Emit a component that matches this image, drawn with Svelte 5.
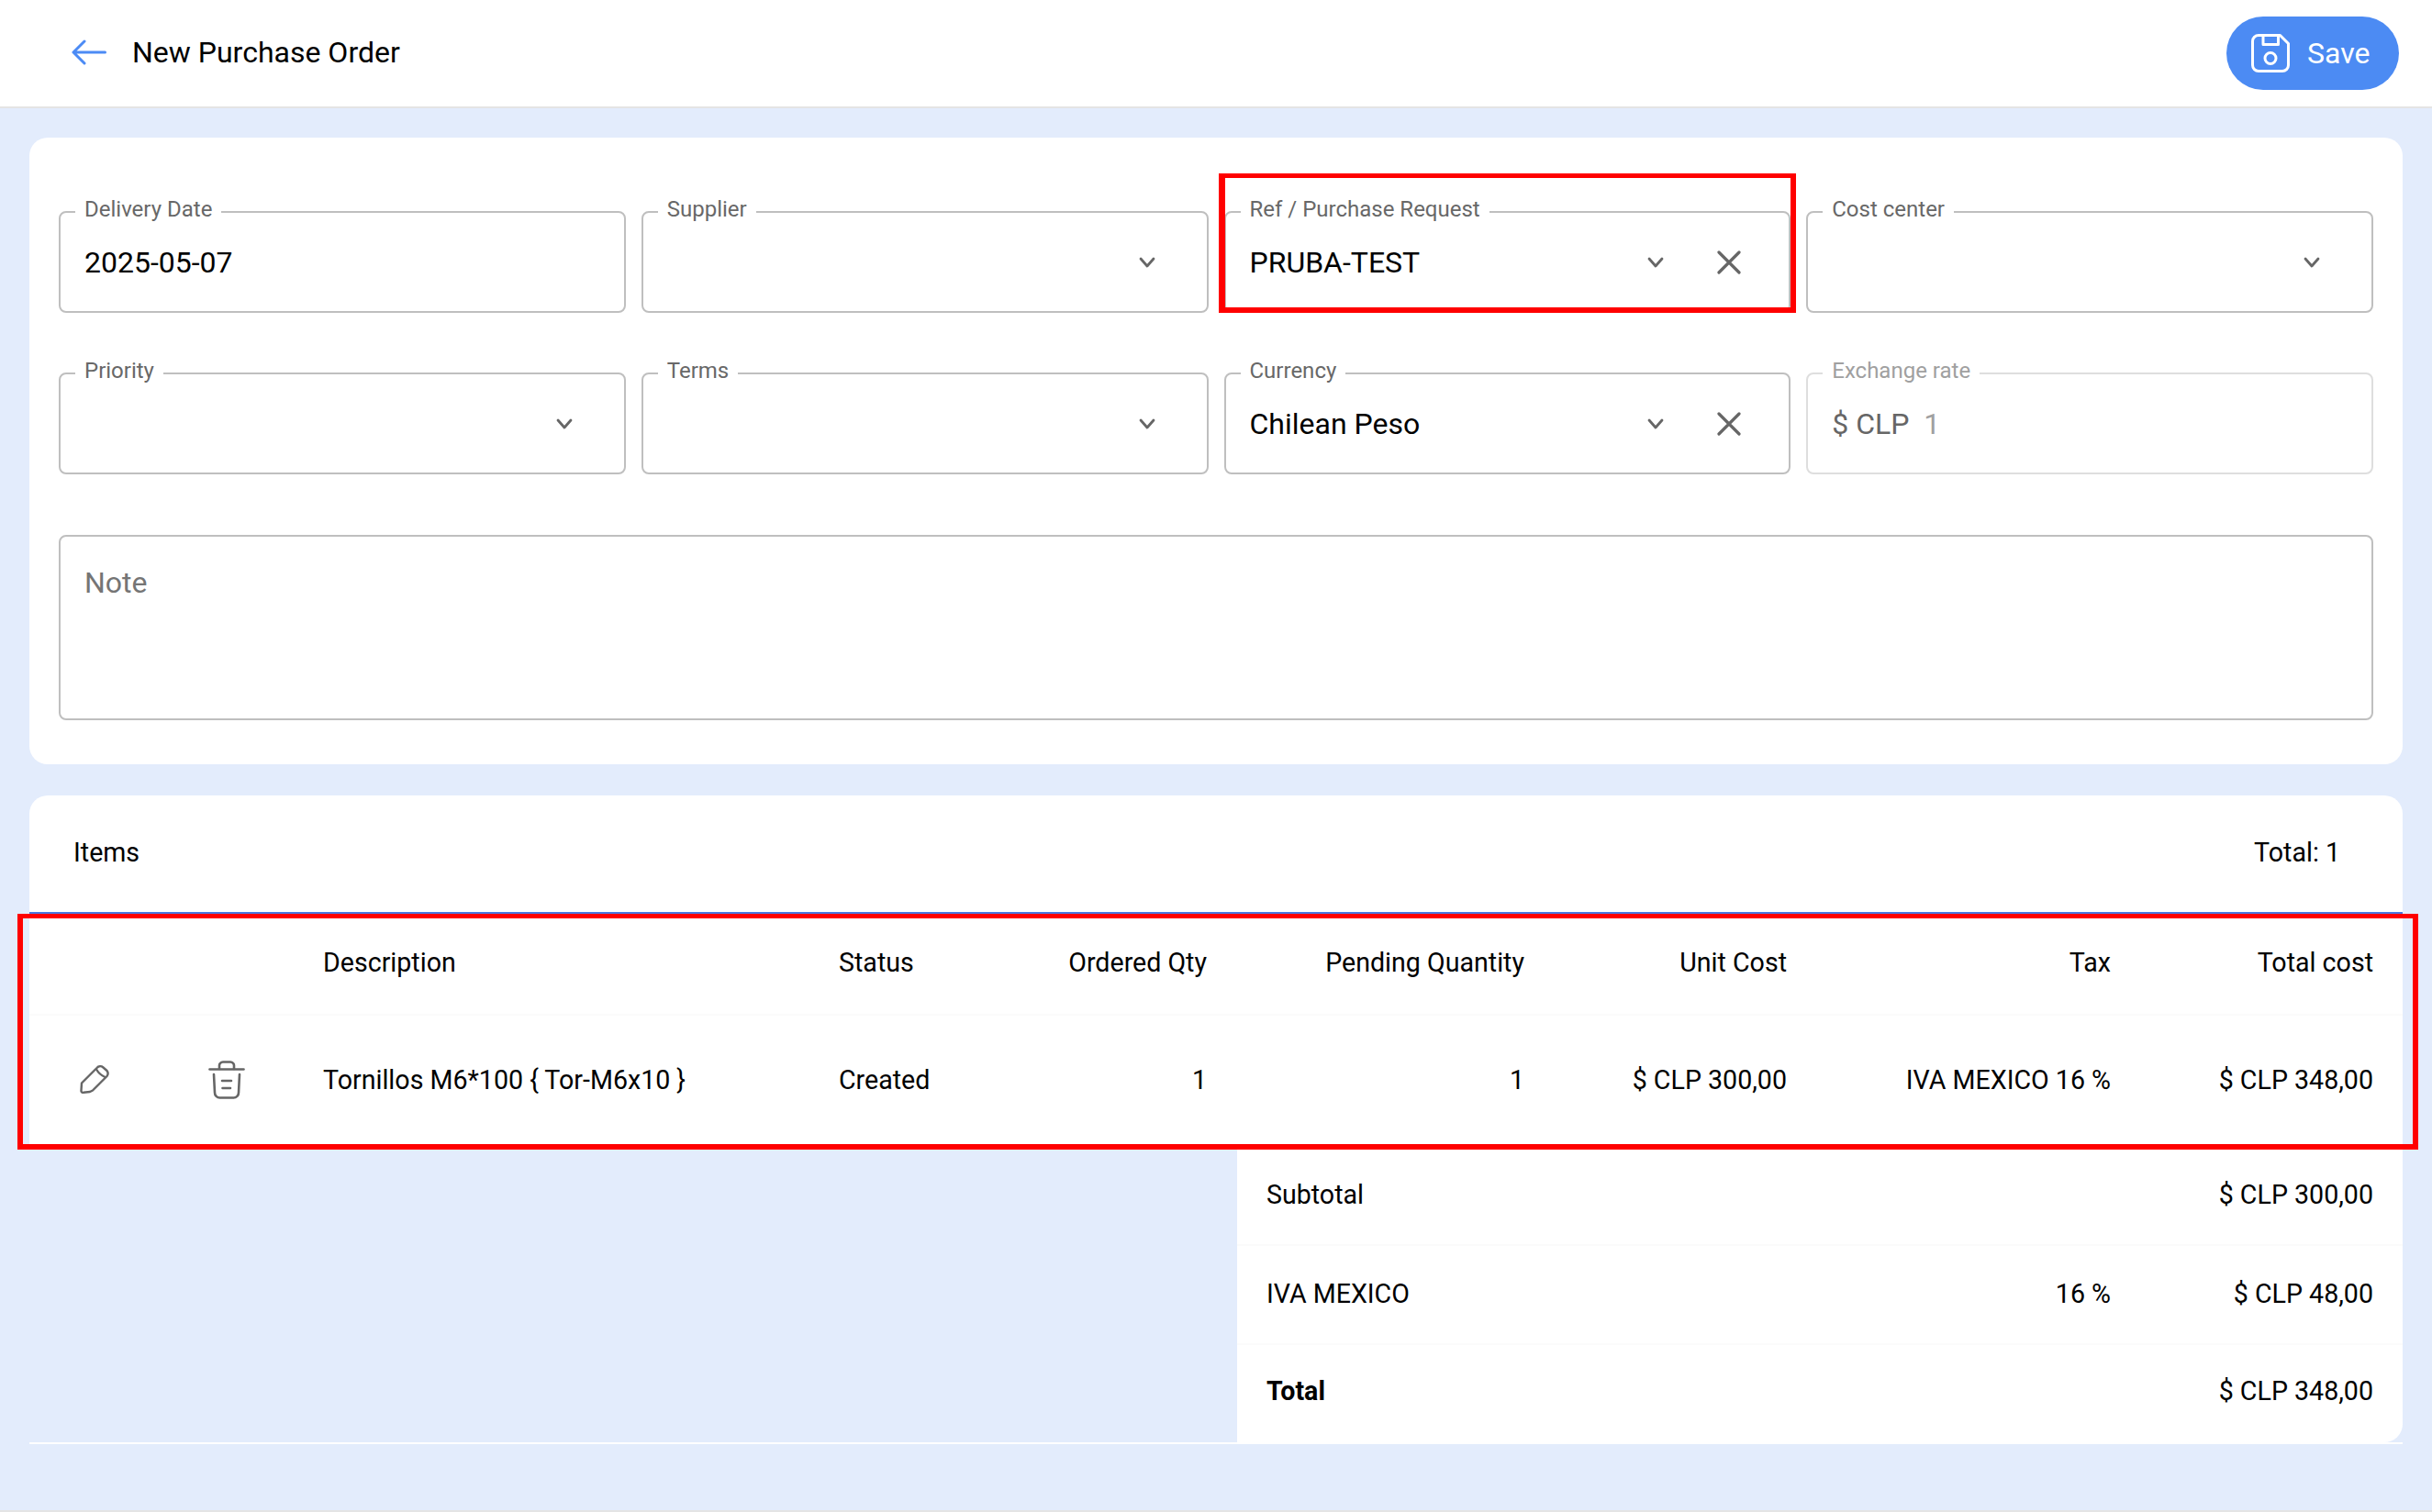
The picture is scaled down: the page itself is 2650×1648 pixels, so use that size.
<script>
  const columns = [
    { label: 'Description', value: 'Tornillos M6*100 { Tor-M6x10 }', align: 'left' },
    { label: 'Status', value: 'Created', align: 'left' },
    { label: 'Ordered Qty', value: '1', align: 'right' },
    { label: 'Pending Quantity', value: '1', align: 'right' },
    { label: 'Unit Cost', value: '$ CLP 300,00', align: 'right' },
    { label: 'Tax', value: 'IVA MEXICO 16 %', align: 'right' },
    { label: 'Total cost', value: '$ CLP 348,00', align: 'right' }
  ];
  const totals = [
    { label: 'Subtotal', rate: '', amount: '$ CLP 300,00', strong: false },
    { label: 'IVA MEXICO', rate: '16 %', amount: '$ CLP 48,00', strong: false },
    { label: 'Total', rate: '', amount: '$ CLP 348,00', strong: true }
  ];
</script>

{#snippet chevron()}
  <svg class="chev" viewBox="0 0 20 20" fill="none" stroke="#666" stroke-width="2.8" stroke-linecap="round" stroke-linejoin="round"><path d="M3 6 10 14 17 6" /></svg>
{/snippet}
{#snippet cross()}
  <svg class="cross" viewBox="0 0 26 26" fill="none" stroke="#666" stroke-width="3.2" stroke-linecap="round"><path d="M2 2 24 24M24 2 2 24" /></svg>
{/snippet}
{#snippet field(label, value, select, clear, cls, prefix)}
  <fieldset class="field {cls}">
    <legend>{label}</legend>
    <span class="value">{#if prefix}<span class="prefix">{prefix}</span>{/if}{value}</span>
    {#if select}<span class="adorn" class:withclear={clear}>{@render chevron()}{#if clear}{@render cross()}{/if}</span>{/if}
  </fieldset>
{/snippet}

<div class="page">
  <header class="topbar">
    <div class="title">
      <svg class="back" viewBox="0 0 38 28" fill="none" stroke="#4c8bf5" stroke-width="3" stroke-linecap="round" stroke-linejoin="round"><path d="M36.5 14H2M14 2 2 14 14 26" /></svg>
      <span>New Purchase Order</span>
    </div>
    <button class="save">
      <svg viewBox="0 0 42 42" fill="none" stroke="#fff" stroke-width="3" stroke-linejoin="round"><path d="M8 1.5H31.5L40.5 10.500V34A6.500 6.500 0 0 1 34 40.500H8A6.500 6.500 0 0 1 1.500 34V8A6.500 6.500 0 0 1 8 1.500Z" /><path d="M13 1.500V11.500H29.500V1.500" /><circle cx="21" cy="26.500" r="6" /></svg>
      <span>Save</span>
    </button>
  </header>

  <main class="content">
    <section class="card form">
      <div class="grid">
        {@render field('Delivery Date', '2025-05-07', false, false, '', '')}
        {@render field('Supplier', '', true, false, '', '')}
        {@render field('Ref / Purchase Request', 'PRUBA-TEST', true, true, '', '')}
        {@render field('Cost center', '', true, false, '', '')}
        {@render field('Priority', '', true, false, '', '')}
        {@render field('Terms', '', true, false, '', '')}
        {@render field('Currency', 'Chilean Peso', true, true, '', '')}
        {@render field('Exchange rate', '1', false, false, 'disabled', '$ CLP\u00a0\u00a0')}
      </div>
      <div class="note">Note</div>
    </section>

    <section class="items">
      <div class="items-head"><span>Items</span><span>Total: 1</span></div>
      <div class="table">
        <div class="row head">
          <span></span><span></span>
          {#each columns as c}<span class="cell" class:right={c.align === 'right'}>{c.label}</span>{/each}
        </div>
        <div class="row body">
          <span class="iconcell">
            <svg class="pencil" viewBox="0 0 32 31" fill="none" stroke="#666" stroke-width="2.4" stroke-linecap="round" stroke-linejoin="round"><path d="M2 19.500 18.500 3A5 5 0 0 1 25.500 2.500L29.500 6A5 5 0 0 1 29.500 12L14 27.500 11 29 4 29.800A2 2 0 0 1 1.500 27.500Z" /><path d="M18 4.500C20 8 23 11 27.500 13" /></svg>
          </span>
          <span class="iconcell">
            <svg class="trash" viewBox="0 0 40 42" fill="none" stroke="#666" stroke-width="2.600" stroke-linecap="round" stroke-linejoin="round"><path d="M1.500 9.500H38.500" /><path d="M12 9V6A4 4 0 0 1 16 1.500H24A4 4 0 0 1 28 6V9" /><path d="M6 15 7 35A5.500 5.500 0 0 0 12.500 40.500H27.500A5.500 5.500 0 0 0 33 35L34 15" /><path d="M15 22H25M15.500 30H24" /></svg>
          </span>
          {#each columns as c}<span class="cell" class:right={c.align === 'right'}>{c.value}</span>{/each}
        </div>
      </div>
      <div class="lower">
        <div class="totals">
          {#each totals as t}
            <div class="total-row" class:strong={t.strong}>
              <span class="t-label">{t.label}</span><span class="t-rate">{t.rate}</span><span class="t-amount">{t.amount}</span>
            </div>
          {/each}
        </div>
      </div>
    </section>
  </main>

  <div class="mark mark-a"></div>
  <div class="mark mark-b"></div>
</div>

<style>
  :global(body) { margin: 0; }
  .page {
    position: relative; width: 2650px; height: 1648px; box-sizing: border-box; overflow: hidden;
    background: #e3ecfc; font-family: Roboto, sans-serif; font-size: 28.6px; color: #000;
    border-bottom: 2px solid #e4e4e4;
  }
  .topbar {
    height: 118px; box-sizing: border-box; background: #fff; border-bottom: 2px solid #e4e4e4;
    display: flex; align-items: center; justify-content: space-between; padding: 0 36px 0 78px;
  }
  .title { display: flex; align-items: center; gap: 28px; font-size: 32px; margin-top: -2px; }
  .back { width: 38px; height: 28px; }
  .save {
    width: 188px; height: 80px; border: 0; border-radius: 40px; background: #4c8bf3; color: #fff;
    display: flex; align-items: center; gap: 19px; padding: 0 0 0 27px;
    font: 32px Roboto, sans-serif;
  }
  .save svg { width: 42px; height: 42px; flex: none; }
  .content { padding: 32px 32px 0; display: flex; flex-direction: column; gap: 34px; }
  .card.form { background: #fff; border-radius: 20px; height: 683px; box-sizing: border-box; padding: 66px 32px 0; }
  .grid { display: grid; grid-template-columns: repeat(4, 1fr); column-gap: 17px; row-gap: 51px; }
  .field {
    position: relative; height: 125px; margin: 0; padding: 0 26px; box-sizing: border-box; min-width: 0;
    border: 2px solid #bfbfbf; border-radius: 8px;
  }
  legend { font-size: 24px; line-height: 24px; color: #686868; padding: 0 10px 6px; margin-left: -10px; height: 30px; box-sizing: border-box; }
  .value { font-size: 32px; position: absolute; left: 26px; top: 18px; line-height: 44px; }
  .adorn { position: absolute; left: 0; right: 0; top: 0; bottom: 0; pointer-events: none; }
  .chev { position: absolute; right: 55px; top: 30px; width: 20px; height: 20px; }
  .withclear .chev { right: 135px; }
  .cross { position: absolute; right: 52px; top: 27px; width: 26px; height: 26px; }
  .disabled { border-color: #dedede; }
  .disabled legend { color: #a0a0a0; }
  .disabled .value { color: #a0a0a0; }
  .prefix { color: #666; }
  .note {
    margin-top: 66px; height: 202px; box-sizing: border-box; border: 2px solid #bfbfbf; border-radius: 8px;
    padding: 30px 26px; font-size: 32px; line-height: 40px; color: #757575;
  }
  .items { display: flex; flex-direction: column; }
  .items-head {
    height: 129px; box-sizing: border-box; background: #fff; border-radius: 20px 20px 0 0;
    border-bottom: 2px solid #4a77e0;
    display: flex; align-items: center; justify-content: space-between; padding: 0 68px 4px 48px;
  }
  .row {
    display: grid; background: #fff; align-items: center;
    grid-template-columns: 142px 146px 562px 233px 233px 346px 286px 352px 286px;
  }
  .head { height: 111px; padding-bottom: 4px; border-bottom: 2px solid #fbfbfb; box-sizing: border-box; }
  .body { height: 143px; padding-bottom: 4px; box-sizing: border-box; }
  .cell { padding: 0 33px 0 32px; white-space: nowrap; box-sizing: border-box; }
  .cell:nth-last-child(-n + 2) { padding-right: 32px; }
  .right { text-align: right; }
  .iconcell { display: flex; justify-content: center; }
  .pencil { width: 32px; height: 31px; }
  .trash { width: 40px; height: 42px; }
  .lower { display: flex; justify-content: flex-end; border-bottom: 2px solid #fff; }
  .totals { width: 1270px; background: #fff; border-radius: 0 0 20px 0; }
  .total-row {
    height: 108px; box-sizing: border-box; display: grid; grid-template-columns: 1fr 352px 286px;
    align-items: center; padding: 0 0 3px 32px; border-bottom: 2px solid #fbfbfb;
  }
  .total-row:last-child { border-bottom: 0; height: 106px; padding-bottom: 6px; }
  .strong .t-label { font-weight: 700; }
  .t-rate, .t-amount { text-align: right; padding-right: 32px; }
  .mark { position: absolute; border-style: solid; border-color: #ff0000; box-sizing: border-box; pointer-events: none; }
  .mark-a { left: 1328px; top: 189px; width: 629px; height: 152px; border-width: 5px 6px 6px 7px; }
  .mark-b { left: 19px; top: 996px; width: 2616px; height: 257px; border-width: 5px 6px 6px 6px; }
</style>
